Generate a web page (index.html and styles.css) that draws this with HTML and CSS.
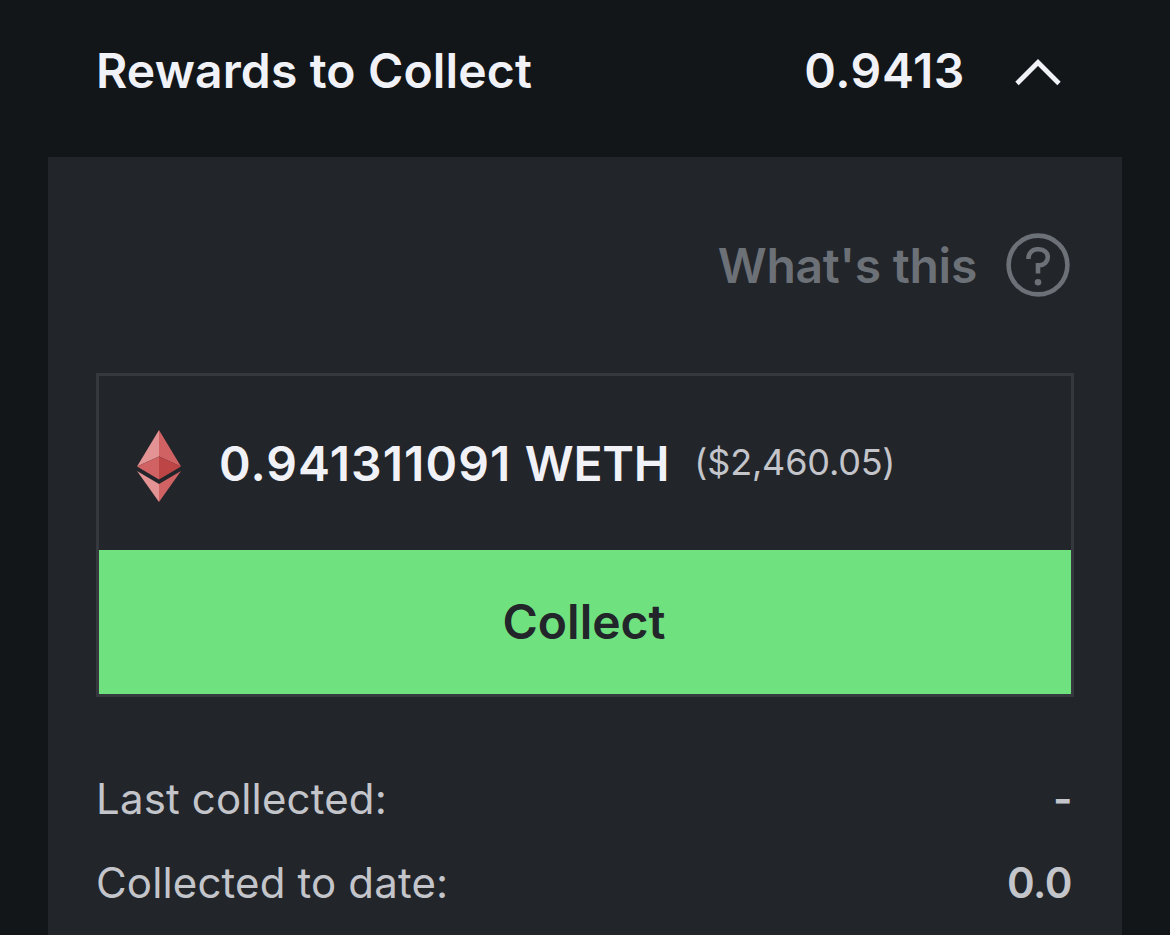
FILE: index.html
```html
<!DOCTYPE html>
<html lang="en">
<head>
    <meta charset="UTF-8">
    <meta name="viewport" content="width=device-width, initial-scale=1.0">
    <title>Rewards</title>
    <link rel="stylesheet" href="styles.css">
</head>
<body>
    <!-- Header -->
    <div class="header">
        <span class="title">Rewards to Collect</span>
        <span class="total">0.9413</span>
        <svg class="chevron" viewBox="0 0 46 28" width="46" height="28">
            <path d="M2 25.500 L23 4.500 L44 25.500" fill="none" stroke="#f1f2f7" stroke-width="4.800"/>
        </svg>
    </div>

    <div class="panel">
        <div class="help">
            <span>What's this</span>
            <svg viewBox="0 0 64 64" width="64" height="64" fill="none" stroke="#6c7077" stroke-width="4.600">
                <circle cx="32" cy="32" r="29.400"/>
                <path d="M22.500 26 V25 A8.800 8.800 0 0 1 31.300 16.200 H33 A8.800 8 0 0 1 41.800 24.200 A8.200 8 0 0 1 33.600 32.200 H32 V40.500"/>
                <circle cx="32" cy="49.200" r="3.300" fill="#6c7077" stroke="none"/>
            </svg>
        </div>

        <!-- Reward card -->
        <div class="card">
            <div class="reward">
                <svg class="token" viewBox="0 0 44 72" width="44" height="72">
                    <polygon points="22,0 0,36.500 22,26.500" fill="#e39394"/>
                    <polygon points="22,0 44,36.500 22,26.500" fill="#d06263"/>
                    <polygon points="0,36.500 22,26.500 22,49.500" fill="#d06263"/>
                    <polygon points="44,36.500 22,26.500 22,49.500" fill="#bd4545"/>
                    <polygon points="0,41 22,54 22,72" fill="#e39394"/>
                    <polygon points="44,41 22,54 22,72" fill="#d06263"/>
                </svg>
                <span class="amount">0.941311091 <span class="symbol">WETH</span></span>
                <span class="usd">($2,460.05)</span>
            </div>
            <button class="collect">Collect</button>
        </div>

        <div class="row">
            <span>Last collected:</span>
            <span class="value">-</span>
        </div>
        <div class="row">
            <span>Collected to date:</span>
            <span class="value">0.0</span>
        </div>
    </div>
</body>
</html>
```
FILE: styles.css
```css
* {
    box-sizing: border-box;
}

body {
    margin: 0;
    height: 935px;
    padding: 0 48px;
    overflow: hidden;
    font-family: Inter, sans-serif;
    background: #131619;
    color: #f1f2f7;
}

.header {
    display: flex;
    align-items: center;
    height: 157px;
    padding: 0 61px 17px 48px;
    font-size: 48px;
    font-weight: 600;
}

.title {
    letter-spacing: 0.15px;
}

.total {
    margin-left: auto;
    margin-right: 50px;
    letter-spacing: 0.6px;
}

.chevron {
    margin-top: 4px;
}

.panel {
    height: 778px;
    padding: 76px 48px 0;
    background: #22252a;
}

.help {
    display: flex;
    align-items: center;
    justify-content: flex-end;
    gap: 29px;
    height: 64px;
    padding-right: 4px;
    font-size: 48px;
    font-weight: 600;
    letter-spacing: -0.25px;
    color: #6c7077;
}

.card {
    height: 324px;
    margin: 76px 0 59px;
    border: 3px solid #35383d;
}

.reward {
    display: flex;
    align-items: center;
    height: 174px;
    padding: 0 0 0 38px;
}

.token {
    margin-top: 6px;
}

.amount {
    margin-left: 38px;
    font-size: 48px;
    font-weight: 600;
    letter-spacing: 1.1px;
}

.symbol {
    letter-spacing: -0.2px;
}

.usd {
    margin-left: 25px;
    padding-bottom: 3px;
    font-size: 36px;
    letter-spacing: -0.2px;
    color: #c3c5cb;
}

.collect {
    display: block;
    width: 100%;
    height: 144px;
    padding: 0 2px 2px 0;
    border: none;
    background: #6fe17e;
    color: #22252a;
    font-family: inherit;
    font-size: 48px;
    font-weight: 600;
    cursor: pointer;
}

.row {
    display: flex;
    align-items: center;
    justify-content: space-between;
    height: 84px;
    padding-right: 2px;
    font-size: 42px;
    letter-spacing: 0.15px;
    color: #c3c5cb;
}

.value {
    font-weight: 600;
    letter-spacing: -0.5px;
}
```
